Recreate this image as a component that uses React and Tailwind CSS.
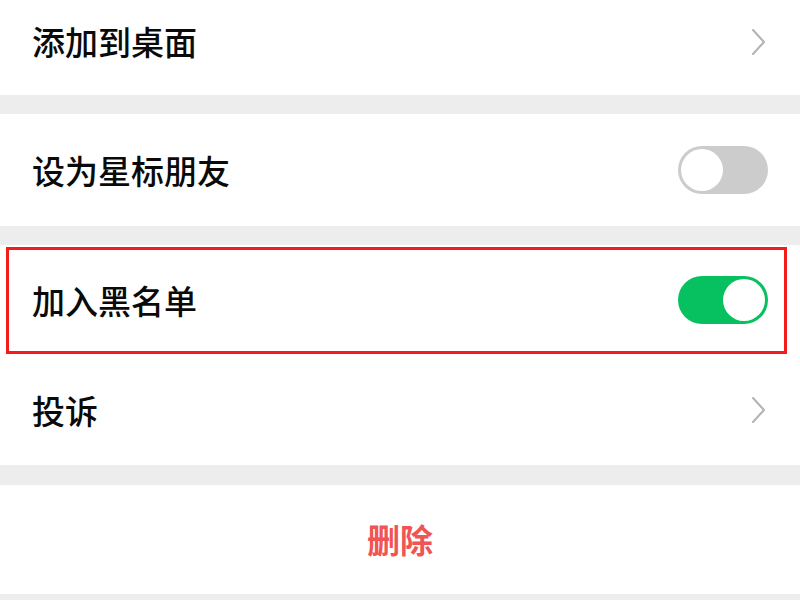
import { useState } from 'react'

function Chevron() {
  return (
    <svg width="16" height="28" viewBox="0 0 16 28" fill="none">
      <path d="M3 2 L14 14 L3 26" stroke="#b2b2b2" strokeWidth="2" strokeLinecap="round" strokeLinejoin="round" />
    </svg>
  )
}

function Toggle({ on, onClick }) {
  return (
    <button
      onClick={onClick}
      className={`relative w-[90px] h-[48px] rounded-full transition-colors ${on ? 'bg-[#07c160]' : 'bg-[#cccccc]'}`}
    >
      <span
        className={`absolute top-[3px] w-[42px] h-[42px] rounded-full bg-white transition-all ${on ? 'left-[45px]' : 'left-[3px]'}`}
      />
    </button>
  )
}

export default function App() {
  const [starred, setStarred] = useState(false)
  const [blocked, setBlocked] = useState(true)

  return (
    <div
      className="min-h-screen bg-[#ededed] text-[#0a0a0a]"
      style={{ fontFamily: '"Noto Sans CJK SC", "Noto Sans", sans-serif' }}
    >
      <div className="h-[95px] bg-white flex items-center justify-between pl-[32px] pr-[34px] pb-[12px]">
        <span className="text-[33px] leading-none font-medium">添加到桌面</span>
        <Chevron />
      </div>

      <div className="mt-[19px] h-[112px] bg-white flex items-center justify-between pl-[32px] pr-[32px]">
        <span className="text-[33px] leading-none font-medium">设为星标朋友</span>
        <Toggle on={starred} onClick={() => setStarred(!starred)} />
      </div>

      <div className="mt-[19px] bg-white">
        <div className="relative h-[110px] flex items-center justify-between pl-[32px] pr-[32px]">
          <span className="text-[33px] leading-none font-medium">加入黑名单</span>
          <Toggle on={blocked} onClick={() => setBlocked(!blocked)} />
          <div className="absolute left-[6px] right-[13px] top-[2px] bottom-[1px] border-[3px] border-[#f21c1c] pointer-events-none" />
        </div>
        <div className="h-[110px] flex items-center justify-between pl-[32px] pr-[34px]">
          <span className="text-[33px] leading-none font-medium">投诉</span>
          <Chevron />
        </div>
      </div>

      <div className="mt-[20px] h-[109px] bg-white flex items-center justify-center">
        <span className="text-[33px] leading-none font-bold text-[#f05454]">删除</span>
      </div>
    </div>
  )
}
